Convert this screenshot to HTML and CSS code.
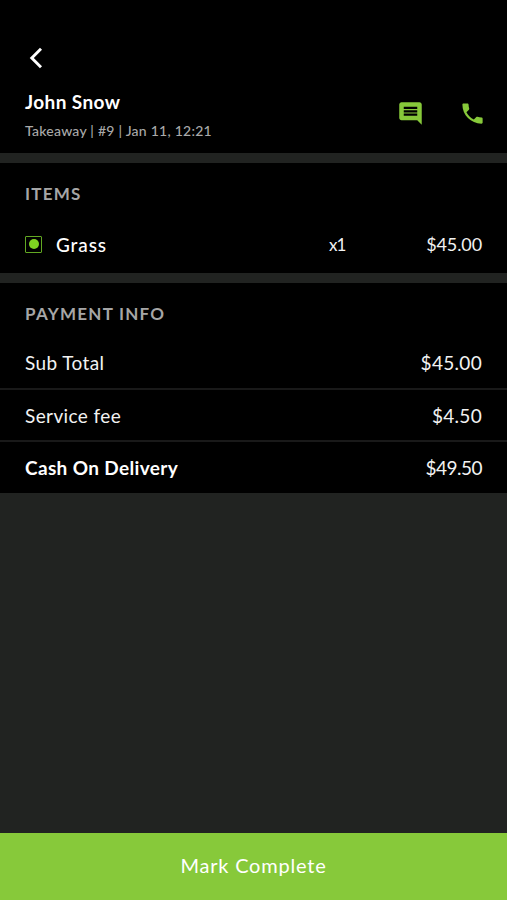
FILE: index.html
```
<!DOCTYPE html>
<html lang="en">
<head>
    <meta charset="UTF-8">
    <meta name="viewport" content="width=device-width, initial-scale=1.0">
    <title>Order #9</title>
    <link rel="stylesheet" href="styles.css">
</head>
<body>

    <header class="order-header">
        <button class="back-btn" aria-label="Back">
            <svg width="14" height="22" viewBox="0 0 14 22"><path d="M12 1.8 2.8 11l9.2 9.2" fill="none" stroke="#fff" stroke-width="2.9"/></svg>
        </button>
        <div class="customer">
            <div class="customer-info">
                <h1>John Snow</h1>
                <p>Takeaway | #9 | Jan 11, 12:21</p>
            </div>
            <div class="actions">
                <button aria-label="Message">
                    <svg width="27" height="27" viewBox="0 0 24 24"><path fill="#87c93a" d="M21.99 4c0-1.1-.89-2-1.99-2H4c-1.1 0-2 .9-2 2v12c0 1.1.9 2 2 2h14l4 4-.01-18zM18 14H6v-2h12v2zm0-3H6V9h12v2zm0-3H6V6h12v2z"/></svg>
                </button>
                <button aria-label="Call">
                    <svg width="27" height="27" viewBox="0 0 24 24"><path fill="#87c93a" d="M6.62 10.79c1.44 2.83 3.76 5.14 6.59 6.59l2.2-2.2c.27-.27.67-.36 1.02-.24 1.12.37 2.33.57 3.57.57.55 0 1 .45 1 1V20c0 .55-.45 1-1 1-9.39 0-17-7.61-17-17 0-.55.45-1 1-1h3.5c.55 0 1 .45 1 1 0 1.25.2 2.45.57 3.57.11.35.03.74-.25 1.02l-2.2 2.2z"/></svg>
                </button>
            </div>
        </div>
    </header>

    <section class="items">
        <h2>ITEMS</h2>
        <div class="item">
            <span class="veg-mark"></span>
            <span class="item-name">Grass</span>
            <span class="qty">x1</span>
            <span class="price">$45.00</span>
        </div>
    </section>

    <section class="payment">
        <h2>PAYMENT INFO</h2>
        <div class="row">
            <span class="label">Sub Total</span>
            <span class="amount">$45.00</span>
        </div>
        <div class="row">
            <span class="label">Service fee</span>
            <span class="amount">$4.50</span>
        </div>
        <div class="row total">
            <span class="label">Cash On Delivery</span>
            <span class="amount">$49.50</span>
        </div>
    </section>

    <button class="complete-btn">Mark Complete</button>

</body>
</html>
```
FILE: styles.css
```
* {
    box-sizing: border-box;
}
body {
    margin: 0;
    min-height: 100vh;
    display: flex;
    flex-direction: column;
    background-color: #212321;
    color: #f2f2f2;
    font-family: Lato, 'Liberation Sans', sans-serif;
    font-size: 19px;
}
button {
    display: block;
    border: none;
    padding: 0;
    background: none;
    font-family: inherit;
    cursor: pointer;
}
svg {
    display: block;
}
h1, h2, p {
    margin: 0;
}
.order-header {
    height: 153px;
    padding: 47px 21px 0 25px;
    background-color: #000;
}
.back-btn {
    margin-left: 4px;
}
.customer {
    display: flex;
    justify-content: space-between;
    margin-top: 21px;
}
.customer h1 {
    font-size: 19px;
    font-weight: 700;
    line-height: 24px;
    letter-spacing: 0.4px;
    color: #fff;
}
.customer p {
    margin-top: 7px;
    font-size: 14px;
    font-weight: 500;
    line-height: 20px;
    letter-spacing: 0.25px;
    color: #a9a9a9;
}
.actions {
    display: flex;
    align-items: flex-start;
    gap: 35px;
    padding-top: 10px;
}
.items, .payment {
    background-color: #000;
}
.items {
    height: 110px;
    margin: 10px 0;
    padding: 19px 25px 0;
}
h2 {
    font-size: 17px;
    font-weight: 700;
    line-height: 24px;
    letter-spacing: 1.25px;
    color: #a6a6a6;
}
.item {
    display: grid;
    grid-template-columns: 31px 273px 60px 1fr;
    align-items: center;
    height: 30px;
    margin-top: 23px;
}
.veg-mark {
    display: flex;
    align-items: center;
    justify-content: center;
    width: 17px;
    height: 17px;
    border: 1px solid #62a822;
    border-radius: 1px;
}
.veg-mark::before {
    content: "";
    width: 10px;
    height: 10px;
    border-radius: 50%;
    background-color: #7ed321;
}
.item-name {
    font-weight: 500;
    letter-spacing: 0.9px;
    color: #fff;
}
.qty {
    font-size: 17px;
    letter-spacing: -1px;
}
.price {
    font-size: 18px;
    letter-spacing: -0.1px;
    text-align: right;
}
.payment {
    height: 210px;
    padding-top: 19px;
}
.payment h2 {
    padding: 0 25px;
    margin-bottom: 10px;
}
.row {
    display: flex;
    align-items: center;
    justify-content: space-between;
    height: 52px;
    padding: 0 25px;
}
.row + .row {
    border-top: 2px solid #191919;
}
.label {
    letter-spacing: 0.4px;
}
.amount {
    letter-spacing: 0.3px;
}
.total .label {
    font-weight: 700;
    letter-spacing: 0.35px;
    color: #fff;
}
.total .amount {
    letter-spacing: -0.5px;
}
.complete-btn {
    height: 67px;
    margin-top: auto;
    padding-bottom: 3px;
    background-color: #87c93a;
    color: #fff;
    font-size: 20px;
    letter-spacing: 0.8px;
}
```
